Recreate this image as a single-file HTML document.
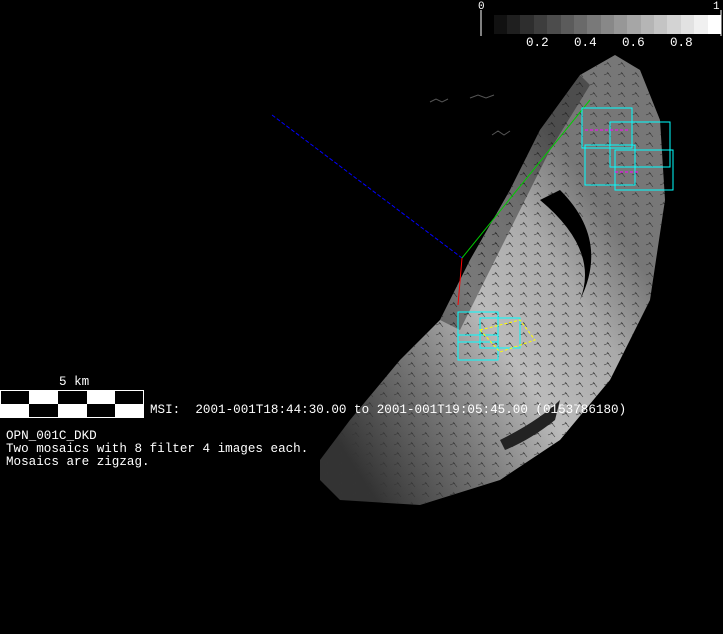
<!DOCTYPE html>
<html><head><style>
body{margin:0;background:#000;width:723px;height:634px;overflow:hidden;position:relative;font-family:"Liberation Mono",monospace;color:#fff}
.t{position:absolute;font-size:11px;white-space:pre;line-height:13px}
.b{font-size:12.6px;line-height:13px}
</style></head><body>
<svg width="723" height="634" style="position:absolute;left:0;top:0">
<defs>
<linearGradient id="g" x1="0" y1="0.8" x2="0.7" y2="0.2">
<stop offset="0" stop-color="#333"/><stop offset="0.3" stop-color="#777"/><stop offset="0.55" stop-color="#bbb"/><stop offset="0.8" stop-color="#aaa"/><stop offset="1" stop-color="#777"/>
</linearGradient>
<pattern id="p" width="14" height="10" patternUnits="userSpaceOnUse">
<path d="M2 5 L7 3 M5 2 L9 7" stroke="#333" stroke-width="0.6"/>
</pattern>
</defs>
<path d="M320,480 L340,500 L420,505 L500,480 L560,440 L610,380 L650,300 L665,200 L660,120 L640,70 L615,55 L580,75 L540,130 L510,190 L470,260 L440,320 L400,360 L350,420 L320,460 Z" fill="url(#g)"/>
<path d="M320,480 L340,500 L420,505 L500,480 L560,440 L610,380 L650,300 L665,200 L660,120 L640,70 L615,55 L580,75 L540,130 L510,190 L470,260 L440,320 L400,360 L350,420 L320,460 Z" fill="url(#p)"/>
<path d="M440,320 L470,260 L510,190 L540,130 L580,75 L590,85 L550,150 L520,210 L485,280 L460,330 Z" fill="#000" opacity="0.35"/>
<path d="M540,200 Q600,250 580,300 Q610,240 560,190Z" fill="#000"/>
<path d="M500,440 Q540,420 560,400 L555,420 Q530,440 505,450Z" fill="#222"/>
<g stroke="#555" stroke-width="1" fill="none"><path d="M430,102 l6,-3 l6,3 l6,-3 M470,98 l8,-3 l8,3 l8,-3 M492,135 l6,-4 l6,4 l6,-4"/></g>
<line x1="272" y1="115" x2="462" y2="258" stroke="#00f" stroke-dasharray="4,2"/>
<line x1="462" y1="258" x2="590" y2="100" stroke="#0c0"/>
<line x1="462" y1="258" x2="458" y2="305" stroke="#f00"/>
<g fill="none" stroke="#0ff">
<rect x="582" y="108" width="50" height="40"/><rect x="610" y="122" width="60" height="45"/><rect x="585" y="145" width="50" height="40"/><rect x="615" y="150" width="58" height="40"/>
<rect x="458" y="312" width="40" height="30"/><rect x="480" y="318" width="40" height="30"/><rect x="458" y="335" width="40" height="25"/>
</g>
<path d="M480,330 L520,320 L535,340 L500,352 Z" fill="none" stroke="#ff0" stroke-dasharray="3,2"/>
<line x1="585" y1="130" x2="630" y2="130" stroke="#f0f" stroke-dasharray="3,2"/>
<line x1="615" y1="172" x2="640" y2="172" stroke="#f0f" stroke-dasharray="3,2"/>
<g>
<rect x="494" y="15" width="14" height="19" fill="#111"/><rect x="507" y="15" width="14" height="19" fill="#1f1f1f"/><rect x="520" y="15" width="14" height="19" fill="#2e2e2e"/><rect x="534" y="15" width="14" height="19" fill="#3d3d3d"/><rect x="547" y="15" width="14" height="19" fill="#4c4c4c"/><rect x="561" y="15" width="14" height="19" fill="#5b5b5b"/><rect x="574" y="15" width="14" height="19" fill="#6a6a6a"/><rect x="587" y="15" width="14" height="19" fill="#797979"/><rect x="601" y="15" width="14" height="19" fill="#888"/><rect x="614" y="15" width="14" height="19" fill="#979797"/><rect x="627" y="15" width="14" height="19" fill="#a6a6a6"/><rect x="641" y="15" width="14" height="19" fill="#b5b5b5"/><rect x="654" y="15" width="14" height="19" fill="#c4c4c4"/><rect x="667" y="15" width="14" height="19" fill="#d3d3d3"/><rect x="681" y="15" width="14" height="19" fill="#e2e2e2"/><rect x="694" y="15" width="14" height="19" fill="#f0f0f0"/><rect x="708" y="15" width="13" height="19" fill="#fff"/>
</g>
<line x1="481" y1="10" x2="481" y2="36" stroke="#fff"/>
<line x1="721" y1="10" x2="721" y2="36" stroke="#fff"/>
<rect x="0.5" y="390.5" width="143" height="27" fill="#fff" stroke="#fff"/>
<rect x="1" y="391" width="28" height="13" fill="#000"/><rect x="58" y="391" width="29" height="13" fill="#000"/><rect x="115" y="391" width="28" height="13" fill="#000"/>
<rect x="29" y="404" width="29" height="13" fill="#000"/><rect x="87" y="404" width="28" height="13" fill="#000"/>
</svg>
<div class="t" style="left:478px;top:1px">0</div>
<div class="t" style="left:713px;top:1px">1</div>
<div class="t b" style="left:526px;top:37px">0.2</div>
<div class="t b" style="left:574px;top:37px">0.4</div>
<div class="t b" style="left:622px;top:37px">0.6</div>
<div class="t b" style="left:670px;top:37px">0.8</div>
<div class="t b" style="left:59px;top:376px">5 km</div>
<div class="t b" style="left:150px;top:404px">MSI:  2001-001T18:44:30.00 to 2001-001T19:05:45.00 (0153786180)</div>
<div class="t b" style="left:6px;top:430px">OPN_001C_DKD
Two mosaics with 8 filter 4 images each.
Mosaics are zigzag.</div>
</body></html>
